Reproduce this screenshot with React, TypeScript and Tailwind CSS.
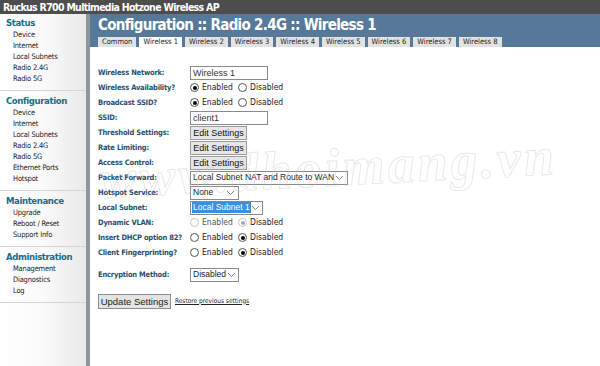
import React from 'react';

const side = [
  { title: 'Status', items: ['Device', 'Internet', 'Local Subnets', 'Radio 2.4G', 'Radio 5G'] },
  { title: 'Configuration', items: ['Device', 'Internet', 'Local Subnets', 'Radio 2.4G', 'Radio 5G', 'Ethernet Ports', 'Hotspot'] },
  { title: 'Maintenance', items: ['Upgrade', 'Reboot / Reset', 'Support Info'] },
  { title: 'Administration', items: ['Management', 'Diagnostics', 'Log'] },
];

const tabs = ['Common', 'Wireless 1', 'Wireless 2', 'Wireless 3', 'Wireless 4', 'Wireless 5', 'Wireless 6', 'Wireless 7', 'Wireless 8'];

// condensed humanist face, close to the Tahoma of the original
const ui = "[font-family:'DejaVu_Sans_Condensed','DejaVu_Sans',sans-serif] [font-stretch:condensed]";

const Radio = ({ on, disabled }: { on?: boolean; disabled?: boolean }) => (
  <span
    className={`inline-flex w-[9px] h-[9px] rounded-full border items-center justify-center bg-white ${
      disabled ? 'border-[#c4c4c4]' : 'border-[#555]'
    }`}
  >
    {on && <span className={`w-[4px] h-[4px] rounded-full ${disabled ? 'bg-[#a8a8a8]' : 'bg-black'}`} />}
  </span>
);

const RadioPair = ({ first, disabled }: { first: boolean; disabled?: boolean }) => (
  <div className={`flex items-center text-[8.5px] leading-none whitespace-nowrap text-[#222] ${ui}`}>
    <span className="flex items-center gap-[3px] w-[48px]">
      <Radio on={first} disabled={disabled} />
      <span className={disabled ? 'text-[#555]' : ''}>Enabled</span>
    </span>
    <span className="flex items-center gap-[3px]">
      <Radio on={!first} disabled={disabled} />
      <span>Disabled</span>
    </span>
  </div>
);

const TextBox = ({ value }: { value: string }) => (
  <div className="w-[78px] h-[14px] border border-[#8a8a8a] bg-white px-[2px] text-[9px] leading-[12px] text-[#333] whitespace-nowrap overflow-hidden">
    {value}
  </div>
);

const EditBtn = () => (
  <div className="w-[57px] h-[14px] border border-[#9a9a9a] bg-[#e6e6e6] text-[9px] leading-[12px] text-[#111] text-center whitespace-nowrap overflow-hidden">
    Edit Settings
  </div>
);

const Select = ({ value, w, hl }: { value: string; w: string; hl?: boolean }) => (
  <div className={`${w} h-[14px] border border-[#8a8a8a] bg-white flex items-center text-[8.5px] text-[#222] whitespace-nowrap overflow-hidden`}>
    <span className={`px-[1px] leading-[11px] ${hl ? 'bg-[#3b8fdc] text-white ml-[1px]' : 'flex-1 pl-[2px]'}`}>{value}</span>
    {hl && <span className="flex-1" />}
    <svg width="9" height="6" viewBox="0 0 9 6" className="mr-[3px] shrink-0">
      <path d="M1 1l3.5 3.5L8 1" fill="none" stroke="#777" strokeWidth="0.9" />
    </svg>
  </div>
);

const rows: { label: string; el: React.ReactNode }[] = [
  { label: 'Wireless Network:', el: <TextBox value="Wireless 1" /> },
  { label: 'Wireless Availability?', el: <RadioPair first /> },
  { label: 'Broadcast SSID?', el: <RadioPair first /> },
  { label: 'SSID:', el: <TextBox value="client1" /> },
  { label: 'Threshold Settings:', el: <EditBtn /> },
  { label: 'Rate Limiting:', el: <EditBtn /> },
  { label: 'Access Control:', el: <EditBtn /> },
  { label: 'Packet Forward:', el: <Select value="Local Subnet NAT and Route to WAN" w="w-[158px]" /> },
  { label: 'Hotspot Service:', el: <Select value="None" w="w-[49px]" /> },
  { label: 'Local Subnet:', el: <Select value="Local Subnet 1" w="w-[73px]" hl /> },
  { label: 'Dynamic VLAN:', el: <RadioPair first={false} disabled /> },
  { label: 'Insert DHCP option 82?', el: <RadioPair first={false} /> },
  { label: 'Client Fingerprinting?', el: <RadioPair first={false} /> },
];

const Label = ({ children }: { children: React.ReactNode }) => (
  <div className={`w-[92px] shrink-0 text-[7.5px] leading-none font-bold text-[#2c4d6e] tracking-[-0.2px] whitespace-nowrap ${ui}`}>
    {children}
  </div>
);

export default function App() {
  return (
    <div className="w-[600px] h-[366px] overflow-hidden flex flex-col bg-white [font-family:'Liberation_Sans',Arial,sans-serif]">
      <div className={`h-[14px] bg-[#4d4d4d] text-white font-bold text-[10.5px] leading-[14px] pl-[3px] tracking-[-0.7px] whitespace-nowrap shrink-0 ${ui}`}>
        Ruckus R700 Multimedia Hotzone Wireless AP
      </div>
      <div className="flex flex-1 min-h-0">
        <aside className={`w-[86px] bg-gradient-to-r from-white via-[#fafafa] to-[#e9e9e9] shrink-0 ${ui}`}>
          {side.map((s, i) => (
            <div key={s.title} className={`border-b border-[#d4d4d4] ${i === 0 ? 'pt-[3px]' : 'pt-[4px]'} pb-[6px]`}>
              <div className="pl-[6px] text-[9.5px] font-bold text-[#1b6a86] leading-[12px] tracking-[-0.4px] whitespace-nowrap">
                {s.title}
              </div>
              {s.items.map((it) => (
                <div key={s.title + it} className="pl-[13px] text-[7.5px] leading-[11px] text-[#222] tracking-[-0.2px] whitespace-nowrap">
                  {it}
                </div>
              ))}
            </div>
          ))}
        </aside>
        <div className="w-[4px] bg-[#8f969c] shrink-0" />
        <main className="flex-1 relative">
          <div className="h-[33px] bg-[#56799a] pl-[8px] pt-[2px]">
            <div className={`text-white font-bold text-[15px] leading-[18px] tracking-[-0.7px] whitespace-nowrap ${ui}`}>
              Configuration :: Radio 2.4G :: Wireless 1
            </div>
            <div className={`flex gap-[3px] mt-[3px] ${ui}`}>
              {tabs.map((t) => (
                <div
                  key={t}
                  className={`h-[10px] px-[4px] text-[7.5px] leading-[10px] text-[#222] whitespace-nowrap ${
                    t === 'Wireless 1' ? 'bg-white' : 'bg-[#e2e2e2]'
                  }`}
                >
                  {t}
                </div>
              ))}
            </div>
          </div>
          <div className="pl-[8px] pt-[18px]">
            {rows.map((r) => (
              <div key={r.label} className="flex items-center h-[15px]">
                <Label>{r.label}</Label>
                {r.el}
              </div>
            ))}
            <div className="flex items-center h-[15px] mt-[7px]">
              <Label>Encryption Method:</Label>
              <Select value="Disabled" w="w-[49px]" />
            </div>
            <div className="flex items-center gap-[4px] mt-[12px]">
              <div className="w-[73px] h-[15px] border border-[#8d8d8d] bg-[#e4e4e4] text-[9.5px] leading-[13px] text-center text-[#222] whitespace-nowrap">
                Update Settings
              </div>
              <span className={`text-[6.5px] underline text-[#222] whitespace-nowrap ${ui}`}>Restore previous settings</span>
            </div>
          </div>
          <div className="absolute left-[10px] top-[114px] -rotate-[3deg] text-[54px] italic font-bold [font-family:'Liberation_Serif',serif] text-transparent [-webkit-text-stroke:1px_rgba(190,190,190,0.35)] tracking-[3px] whitespace-nowrap pointer-events-none select-none">
            www.dhoimang.vn
          </div>
        </main>
      </div>
    </div>
  );
}
